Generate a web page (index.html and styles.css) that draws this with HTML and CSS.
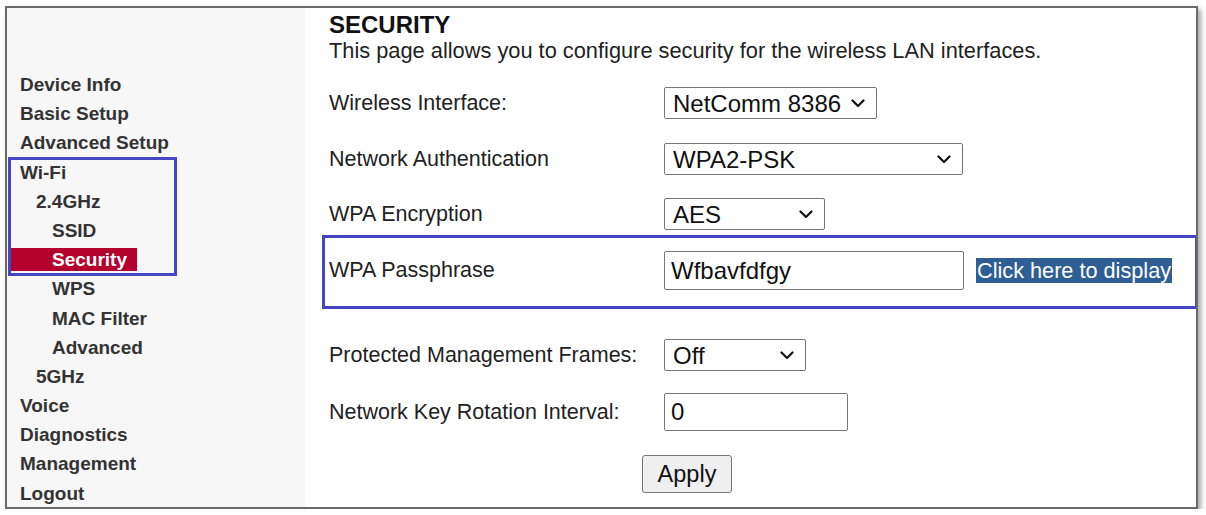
FILE: index.html
```html
<!DOCTYPE html>
<html>
<head>
<meta charset="utf-8">
<link rel="stylesheet" href="styles.css">
</head>
<body>
<div class="frame">
  <nav class="side">
    <div class="item l0">Device Info</div>
    <div class="item l0">Basic Setup</div>
    <div class="item l0">Advanced Setup</div>
    <div class="item l0">Wi-Fi</div>
    <div class="item l1">2.4GHz</div>
    <div class="item l2">SSID</div>
    <div class="item l2 active"><span class="hl">Security</span></div>
    <div class="item l2">WPS</div>
    <div class="item l2">MAC Filter</div>
    <div class="item l2">Advanced</div>
    <div class="item l1">5GHz</div>
    <div class="item l0">Voice</div>
    <div class="item l0">Diagnostics</div>
    <div class="item l0">Management</div>
    <div class="item l0">Logout</div>
  </nav>
  <main class="main">
    <h1 class="title">SECURITY</h1>
    <p class="desc">This page allows you to configure security for the wireless LAN interfaces.</p>
    <div class="row r1">
      <label class="lbl">Wireless Interface:</label>
      <select class="ctl sel sel-iface"><option>NetComm 8386</option></select>
    </div>
    <div class="row r2">
      <label class="lbl">Network Authentication</label>
      <select class="ctl sel sel-auth"><option>WPA2-PSK</option></select>
    </div>
    <div class="row r3">
      <label class="lbl">WPA Encryption</label>
      <select class="ctl sel sel-enc"><option>AES</option></select>
    </div>
    <div class="row r4">
      <label class="lbl">WPA Passphrase</label>
      <input class="ctl txt-pass" type="text" value="Wfbavfdfgy">
      <a class="show">Click here to display</a>
    </div>
    <div class="row r5">
      <label class="lbl">Protected Management Frames:</label>
      <select class="ctl sel sel-pmf"><option>Off</option></select>
    </div>
    <div class="row r6">
      <label class="lbl">Network Key Rotation Interval:</label>
      <input class="ctl txt-key" type="text" value="0">
    </div>
    <div class="actions">
      <button class="apply">Apply</button>
    </div>
  </main>
  <div class="mark mark-wifi"></div>
  <div class="mark mark-pass"></div>
</div>
</body>
</html>
```
FILE: styles.css
```css
html, body {
  margin: 0;
  padding: 0;
  background: #ffffff;
}
.frame {
  position: relative;
  box-sizing: border-box;
  margin: 6px 0 0 5px;
  width: 1193px;
  height: 503px;
  border: 2px solid #6a6a6a;
  box-shadow: 3px 3px 5px rgba(0,0,0,0.35);
  display: grid;
  grid-template-columns: 298px 1fr;
  background: #ffffff;
  overflow: hidden;
}
.side {
  background: #f7f7f7;
  padding-top: 62px;
  font-family: "Liberation Sans", Arial, sans-serif;
  font-weight: bold;
  font-size: 19px;
  color: #333333;
}
.item {
  height: 29.2px;
  line-height: 29.2px;
  white-space: nowrap;
}
.l0 { padding-left: 13px; }
.l1 { padding-left: 29px; }
.l2 { padding-left: 45px; }
.item.active { padding-left: 2px; }
.hl {
  display: inline-block;
  background: #b3002d;
  color: #ffffff;
  height: 23px;
  line-height: 23px;
  padding: 0 10px 0 43px;
}
.main {
  padding: 4px 0 0 24px;
  font-family: "Liberation Sans", Arial, sans-serif;
  color: #222222;
}
.title {
  margin: 0;
  font-size: 24px;
  line-height: 26px;
  font-weight: bold;
  color: #111111;
}
.desc {
  margin: 1px 0 0 0;
  font-size: 21.8px;
  line-height: 24px;
}
.row {
  display: flex;
  align-items: center;
  height: 32px;
}
.r1 { margin-top: 24px; }
.r2 { margin-top: 24px; }
.r3 { margin-top: 23px; }
.r4 { margin-top: 21px; height: 39px; }
.r5 { margin-top: 49px; }
.r6 { margin-top: 22px; height: 38px; }
.lbl {
  width: 335px;
  flex: none;
  font-size: 21.5px;
}
.ctl {
  box-sizing: border-box;
  font-family: "Liberation Sans", Arial, sans-serif;
  font-size: 24px;
  color: #111111;
  border: 1px solid #767676;
  border-radius: 2px;
  background-color: #ffffff;
  margin: 0;
}
.sel {
  -webkit-appearance: none;
  appearance: none;
  height: 32px;
  padding: 0 30px 0 8px;
  background-image: url("data:image/svg+xml,%3Csvg xmlns='http://www.w3.org/2000/svg' width='14' height='9' viewBox='0 0 14 9'%3E%3Cpath d='M1.5 1.5L7 7l5.5-5.5' fill='none' stroke='%23111' stroke-width='2.2' stroke-linecap='round' stroke-linejoin='round'/%3E%3C/svg%3E");
  background-repeat: no-repeat;
  background-position: right 11px center;
  background-size: 14px 9px;
}
.sel-iface { width: 213px; }
.sel-auth { width: 299px; }
.sel-enc { width: 161px; }
.sel-pmf { width: 142px; }
.txt-pass {
  width: 300px;
  height: 39px;
  padding: 0 6px;
}
.txt-key {
  width: 184px;
  height: 38px;
  padding: 0 6px;
}
.show {
  margin-left: 12px;
  background: #2e5e94;
  color: #ffffff;
  font-size: 21.7px;
  line-height: 25px;
  height: 25px;
  padding: 0 1px;
}
.actions {
  margin-top: 24px;
  padding-left: 313px;
}
.apply {
  box-sizing: border-box;
  width: 90px;
  height: 38px;
  font-family: "Liberation Sans", Arial, sans-serif;
  font-size: 23.5px;
  color: #111111;
  background: #efefef;
  border: 1px solid #767676;
  border-radius: 3px;
  padding: 0;
}
.mark {
  position: absolute;
  border: 3px solid #4646c4;
  box-sizing: border-box;
  pointer-events: none;
}
.mark-wifi {
  left: 1px;
  top: 149px;
  width: 169px;
  height: 119px;
}
.mark-pass {
  left: 315px;
  top: 227px;
  width: 876px;
  height: 74px;
}
```
